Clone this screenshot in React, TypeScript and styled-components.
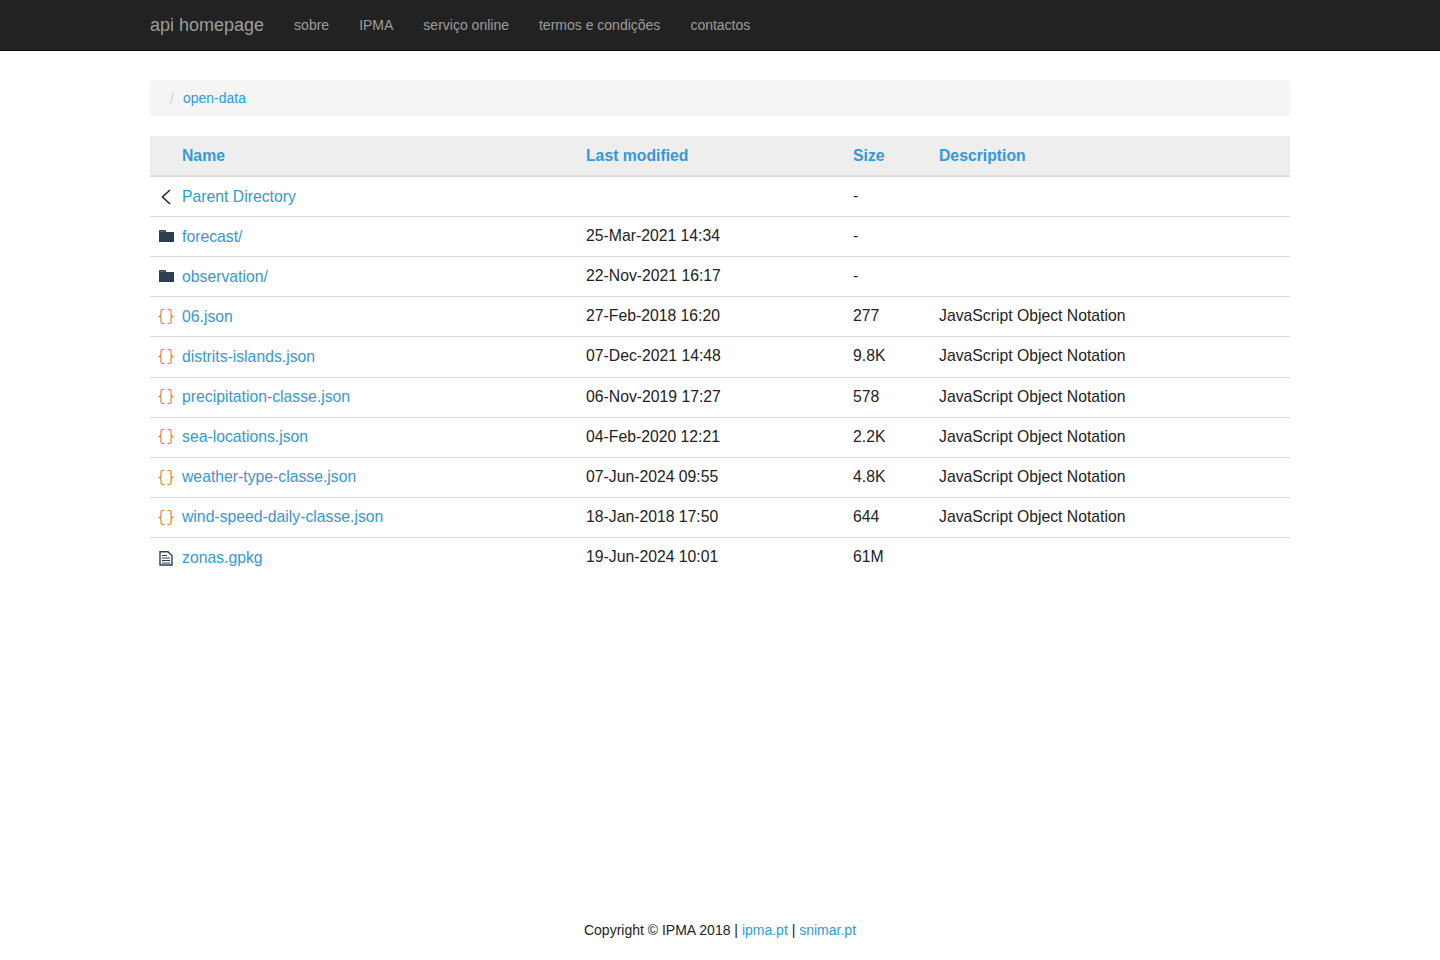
import React from 'react';
import styled, { createGlobalStyle } from 'styled-components';

const GlobalStyle = createGlobalStyle`
    html, body {
        margin: 0;
        padding: 0;
        background: #fff;
    }
    * {
        box-sizing: border-box;
    }
    body {
        font-family: "Liberation Sans", Arial, sans-serif;
        font-size: 14px;
        line-height: 20px;
        color: #222;
    }
    a {
        color: #3498db;
        text-decoration: none;
    }
`;

const Page = styled.div`
    display: flex;
    flex-direction: column;
    height: 960px;
`;

const Navbar = styled.nav`
    height: 51px;
    background: #222;
    border-bottom: 1px solid #080808;
    flex-shrink: 0;
`;

const Container = styled.div`
    width: 1140px;
    margin: 0 auto;
`;

const NavInner = styled(Container)`
    display: flex;
    align-items: center;
    height: 50px;
`;

const Brand = styled.a`
    font-size: 18px;
    color: #9d9d9d;
    margin-right: 15px;
`;

const NavLink = styled.a`
    font-size: 14px;
    color: #9d9d9d;
    padding: 0 15px;
`;

const Main = styled(Container)`
    flex: 1;
    padding-top: 29px;
`;

const Breadcrumb = styled.div`
    display: flex;
    align-items: center;
    height: 36px;
    padding: 0 20px;
    margin-bottom: 20px;
    background: #f5f5f5;
    border-radius: 4px;
`;

const Slash = styled.span`
    color: #ccc;
    margin-right: 9px;
`;

const Table = styled.table`
    width: 1140px;
    border-collapse: separate;
    border-spacing: 0;
    table-layout: fixed;
    font-size: 15.75px;
    line-height: 22.5px;
`;

const HeadCell = styled.th<{ $w: number; $flush?: boolean }>`
    width: ${p => p.$w}px;
    height: 41px;
    padding: 2px 8px 0;
    padding-left: ${p => (p.$flush ? 0 : 8)}px;
    background: #eee;
    border-bottom: 2px solid #ddd;
    text-align: left;
    font-weight: bold;
`;

const Cell = styled.td`
    height: 40.12px;
    padding: 8px 8px 0;
    border-top: 1px solid #ddd;
    vertical-align: top;
    color: #222;
    white-space: nowrap;
    tr:first-child > & {
        height: 39.1px;
        border-top: 0;
    }
`;

const NameCell = styled(Cell)`
    padding-top: 8.58px;
    padding-left: 0;
    tr:first-child > & {
        padding-top: 9px;
    }
`;

const IconCell = styled(Cell)`
    padding: 10.85px 0 0;
    line-height: 0;
    tr:first-child > & {
        padding-top: 12px;
    }
    svg {
        display: block;
        margin: 0 auto;
    }
`;

const Footer = styled.footer`
    height: 40px;
    text-align: center;
    font-size: 14px;
    flex-shrink: 0;
`;

const ParentIcon = () => (
    <svg width="12" height="18" viewBox="0 0 12 18" fill="none" stroke="#222" strokeWidth="1.5">
        <path d="M10 1 L2.5 8 L10 15" />
    </svg>
);

const FolderIcon = () => (
    <svg width="15" height="18" viewBox="0 0 15 18">
        <path fill="#2c3e50" d="M0 3 Q0 2 1 2 H6 Q7 2 7 3 V4 H15 V14 H0 Z" />
        <path stroke="#8796a5" strokeWidth=".6" d="M1 3.3 H6" />
    </svg>
);

const JsonIcon = () => (
    <svg width="16" height="18" viewBox="0 0 16 18" fill="none" stroke="#e67e22" strokeWidth="1.15">
        <path d="M6.5 1.5 H5 Q3 1.5 3 3.4 V6.5 Q3 8.5 .5 8.5 Q3 8.5 3 10.5 V13.6 Q3 15.5 5 15.5 H6.5" />
        <path d="M9.5 1.5 H11 Q13 1.5 13 3.4 V6.5 Q13 8.5 15.5 8.5 Q13 8.5 13 10.5 V13.6 Q13 15.5 11 15.5 H9.5" />
    </svg>
);

const FileIcon = () => (
    <svg width="14" height="18" viewBox="0 0 14 18" fill="none" stroke="#2c3e50" strokeWidth="1.4">
        <path d="M1 2.7 H9 L13 6.7 V16 H1 Z" />
        <path strokeWidth="1" d="M3 6.5 H8 M3 9 H11 M3 11.5 H11 M3 14 H11" />
    </svg>
);

const icons = {
    parent: <ParentIcon />,
    folder: <FolderIcon />,
    json: <JsonIcon />,
    file: <FileIcon />,
};

const JSON_DESC = 'JavaScript Object Notation';

const rows: { icon: keyof typeof icons; name: string; date: string; size: string; desc: string }[] = [
    { icon: 'parent', name: 'Parent Directory', date: '', size: '-', desc: '' },
    { icon: 'folder', name: 'forecast/', date: '25-Mar-2021 14:34', size: '-', desc: '' },
    { icon: 'folder', name: 'observation/', date: '22-Nov-2021 16:17', size: '-', desc: '' },
    { icon: 'json', name: '06.json', date: '27-Feb-2018 16:20', size: '277', desc: JSON_DESC },
    { icon: 'json', name: 'distrits-islands.json', date: '07-Dec-2021 14:48', size: '9.8K', desc: JSON_DESC },
    { icon: 'json', name: 'precipitation-classe.json', date: '06-Nov-2019 17:27', size: '578', desc: JSON_DESC },
    { icon: 'json', name: 'sea-locations.json', date: '04-Feb-2020 12:21', size: '2.2K', desc: JSON_DESC },
    { icon: 'json', name: 'weather-type-classe.json', date: '07-Jun-2024 09:55', size: '4.8K', desc: JSON_DESC },
    { icon: 'json', name: 'wind-speed-daily-classe.json', date: '18-Jan-2018 17:50', size: '644', desc: JSON_DESC },
    { icon: 'file', name: 'zonas.gpkg', date: '19-Jun-2024 10:01', size: '61M', desc: '' },
];

const App = () => (
    <Page>
        <GlobalStyle />
        <Navbar>
            <NavInner>
                <Brand href="#">api homepage</Brand>
                <NavLink href="#">sobre</NavLink>
                <NavLink href="#">IPMA</NavLink>
                <NavLink href="#">serviço online</NavLink>
                <NavLink href="#">termos e condições</NavLink>
                <NavLink href="#">contactos</NavLink>
            </NavInner>
        </Navbar>
        <Main>
            <Breadcrumb>
                <Slash>/</Slash>
                <a href="#">open-data</a>
            </Breadcrumb>
            <Table>
                <thead>
                    <tr>
                        <HeadCell $w={32} />
                        <HeadCell $w={396} $flush><a href="#">Name</a></HeadCell>
                        <HeadCell $w={267}><a href="#">Last modified</a></HeadCell>
                        <HeadCell $w={86}><a href="#">Size</a></HeadCell>
                        <HeadCell $w={359}><a href="#">Description</a></HeadCell>
                    </tr>
                </thead>
                <tbody>
                    {rows.map(r => (
                        <tr key={r.name}>
                            <IconCell>{icons[r.icon]}</IconCell>
                            <NameCell><a href="#">{r.name}</a></NameCell>
                            <Cell>{r.date}</Cell>
                            <Cell>{r.size}</Cell>
                            <Cell>{r.desc}</Cell>
                        </tr>
                    ))}
                </tbody>
            </Table>
        </Main>
        <Footer>
            Copyright © IPMA 2018 | <a href="#">ipma.pt</a> | <a href="#">snimar.pt</a>
        </Footer>
    </Page>
);

export default App;
